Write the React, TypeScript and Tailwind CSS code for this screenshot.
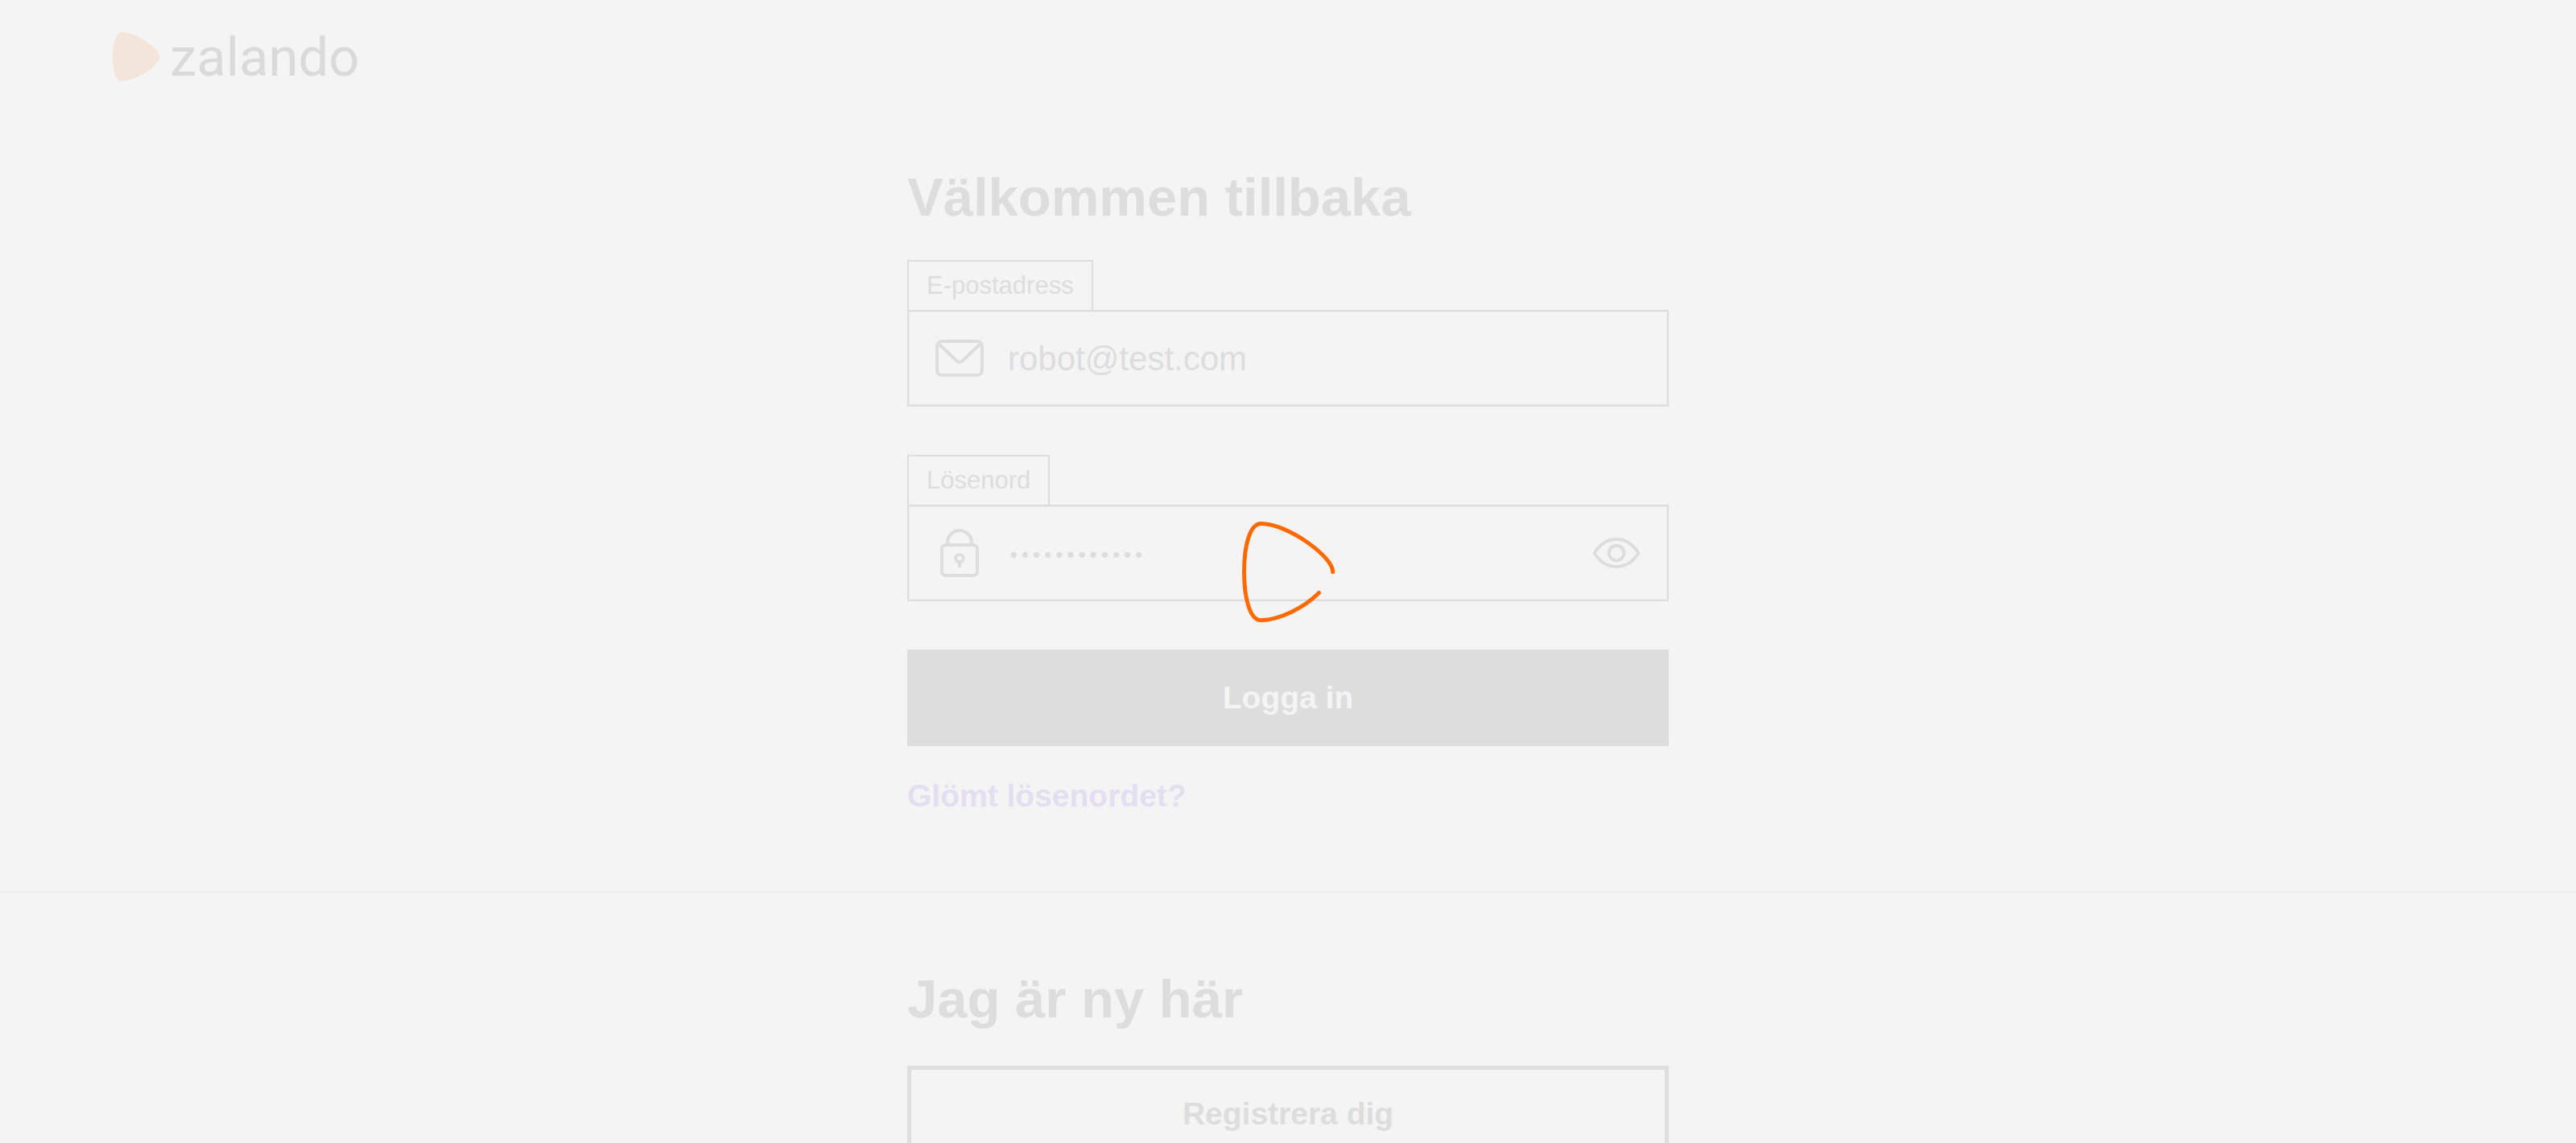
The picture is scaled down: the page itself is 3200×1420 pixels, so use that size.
import { useState, type ReactNode } from "react";

function Logo() {
  return (
    <a href="#" aria-label="zalando" className="flex w-fit items-center gap-3 text-[#dadada]">
      <svg width="59" height="61" viewBox="0 0 59 61" aria-hidden="true">
        <path
          d="M11 0C23 0 38 8 49 17C55 22 58.500 27 58.500 30.500C58.500 34 55 39 49 44C38 53 23 61 11 61C7 61 5 57.500 3.500 54C1.200 48 0 40 0 30.500C0 21 1.200 13 3.500 7C5 3.500 7 0 11 0Z"
          fill="#f3e5d9"
        />
      </svg>
      <span className="font-[Roboto,sans-serif] text-[67px] leading-[60px]">zalando</span>
    </a>
  );
}

function MailIcon() {
  return (
    <svg width="60" height="60" viewBox="0 0 60 60" fill="none" stroke="currentColor" strokeWidth="4" className="shrink-0" aria-hidden="true">
      <rect x="2" y="9" width="56" height="42" rx="6" />
      <path d="M4 12L26 33Q30 37 34 33L56 12" />
    </svg>
  );
}

function LockIcon() {
  return (
    <svg width="60" height="60" viewBox="0 0 60 60" fill="none" stroke="currentColor" strokeWidth="4" strokeLinecap="round" className="shrink-0" aria-hidden="true">
      <rect x="8" y="20" width="44" height="38" rx="5" />
      <path d="M15 19V17A15 15 0 0 1 45 17V19" strokeLinecap="butt" />
      <circle cx="30" cy="36.500" r="4.800" />
      <path d="M30 42V47" />
    </svg>
  );
}

function EyeIcon() {
  return (
    <svg width="60" height="60" viewBox="0 0 60 60" fill="none" stroke="currentColor" strokeWidth="4" aria-hidden="true">
      <path d="M2.500 30C17 7.300 43 7.300 57.500 30C43 52.700 17 52.700 2.500 30Z" />
      <circle cx="30" cy="30" r="9.300" />
    </svg>
  );
}

type FieldProps = {
  id: string;
  label: string;
  type: string;
  value: string;
  onChange: (value: string) => void;
  icon: ReactNode;
  action?: ReactNode;
};

function Field({ id, label, type, value, onChange, icon, action }: FieldProps) {
  const textStyle = type === "password" ? "font-['DejaVu_Sans',sans-serif] text-2xl pt-2" : "text-[42px]";
  return (
    <div className="flex flex-col items-start">
      <label htmlFor={id} className="border-2 border-b-0 border-[#dddddd] px-[22px] text-[31px] leading-[60px]">
        {label}
      </label>
      <div className="flex h-[120px] w-full items-center gap-[30px] border-2 border-[#dddddd] px-[33px] shadow-[inset_0_0_0_1px_#ebebeb]">
        {icon}
        <input
          id={id}
          type={type}
          value={value}
          onChange={(e) => onChange(e.target.value)}
          className={`h-[60px] min-w-0 flex-1 bg-transparent outline-none ${textStyle}`}
        />
        {action}
      </div>
    </div>
  );
}

function Spinner() {
  return (
    <div role="status" aria-label="Laddar" className="pointer-events-none fixed inset-0 flex items-center justify-center">
      <svg width="120" height="130" viewBox="0 0 120 130" fill="none" stroke="#ff6900" strokeWidth="5" strokeLinecap="round">
        <path d="M115.700 65.500C115.700 46 59 5.500 26.500 5.500C13 5.500 5.500 32 5.500 65C5.500 99 13 125.500 26 125.500C49 125.500 80 110 98.500 91.500" />
      </svg>
    </div>
  );
}

export default function App() {
  const [email, setEmail] = useState("robot@test.com");
  const [password, setPassword] = useState("robotrobot12");
  const [visible, setVisible] = useState(false);

  return (
    <div className="h-screen overflow-hidden bg-[#f4f4f4] font-['Liberation_Sans',Arial,sans-serif] text-[#dddddd]">
      <header className="px-[140px] pt-10">
        <Logo />
      </header>
      <main>
        <section className="border-b-2 border-[#eeeeee] pt-[104px] pb-[94px]">
          <form className="mx-auto w-full max-w-[946px]" onSubmit={(e) => e.preventDefault()}>
            <h1 className="text-[67px] leading-[80px] font-bold">Välkommen tillbaka</h1>
            <div className="mt-[38px] flex flex-col gap-[60px]">
              <Field id="email" label="E-postadress" type="email" value={email} onChange={setEmail} icon={<MailIcon />} />
              <Field
                id="password"
                label="Lösenord"
                type={visible ? "text" : "password"}
                value={password}
                onChange={setPassword}
                icon={<LockIcon />}
                action={
                  <button type="button" aria-label="Visa lösenord" onClick={() => setVisible(!visible)}>
                    <EyeIcon />
                  </button>
                }
              />
              <button type="submit" className="h-[120px] w-full bg-[#dddddd] text-[39px] font-bold text-[#f4f4f4]">
                Logga in
              </button>
            </div>
            <a href="#" className="mt-[38px] block w-fit text-[39px] leading-[48px] font-bold text-[#e3dff1]">
              Glömt lösenordet?
            </a>
          </form>
        </section>
        <section className="mx-auto w-full max-w-[946px] pt-[92px]">
          <h2 className="text-[67px] leading-[80px] font-bold">Jag är ny här</h2>
          <button type="button" className="mt-[43px] h-[120px] w-full border-[5px] border-[#dddddd] text-[39px] font-bold">
            Registrera dig
          </button>
        </section>
      </main>
      <Spinner />
    </div>
  );
}
